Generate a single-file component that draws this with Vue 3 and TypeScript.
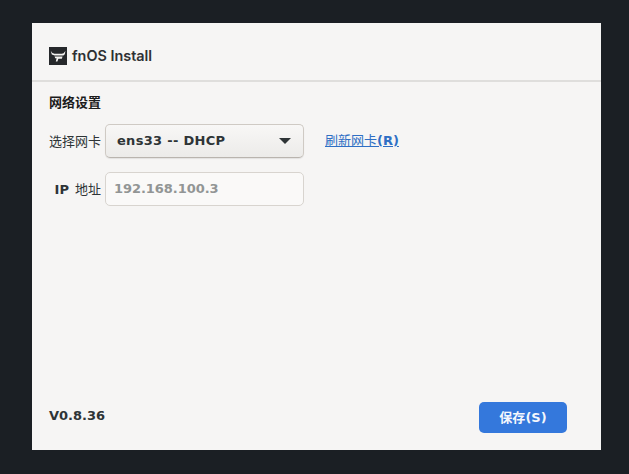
<template>
  <div class="screen">
    <div class="window">
      <header class="head">
        <svg class="logo" width="18" height="18" viewBox="0 0 18 18">
          <rect width="18" height="18" fill="#26282b" />
          <path d="M1.8 4 L2.8 7.4 L5.6 8.4 H14.4 L15.8 7.2 L16.4 4 L14.6 6.2 L12.8 6.8 H5.4 L3.4 6 Z" fill="#f5f4f2" />
          <path d="M5.6 9.6 H13.6 L12.8 11.8 H9.4 L8.4 14.6 H6.8 L7.6 11.2 H6.2 Z" fill="#f5f4f2" />
        </svg>
        <span class="brand">{{ brand }}</span>
      </header>

      <section class="body">
        <h2 class="section-title">网络设置</h2>
        <div class="row">
          <label class="label">选择网卡</label>
          <div class="select">
            <span>{{ nic }}</span>
            <i class="caret"></i>
          </div>
          <a class="refresh" href="#">刷新网卡<b>(R)</b></a>
        </div>
        <div class="row">
          <label class="label"><b>IP</b><span class="gap"></span>地址</label>
          <div class="input">{{ ip }}</div>
        </div>
      </section>

      <footer class="foot">
        <span class="version">{{ version }}</span>
        <button class="save">保存<b>(S)</b></button>
      </footer>
    </div>
  </div>
</template>

<script setup lang="ts">
import { ref } from 'vue'

const brand = ref('fnOS Install')
const nic = ref('ens33 -- DHCP')
const ip = ref('192.168.100.3')
const version = ref('V0.8.36')
</script>

<style>
html, body {
  margin: 0;
  background: #1b1f24;
}
</style>

<style scoped>
.screen {
  width: 629px;
  height: 474px;
  box-sizing: border-box;
  padding: 23px 28px 24px 32px;
  background: #1b1f24;
  font-family: "DejaVu Sans", "Noto Sans CJK SC", sans-serif;
}

.window {
  height: 427px;
  display: flex;
  flex-direction: column;
  background: #f6f5f4;
}

.head {
  height: 59px;
  box-sizing: border-box;
  padding: 24px 17px 0;
  display: flex;
  align-items: flex-start;
  gap: 5px;
  border-bottom: 2px solid #dfdedc;
  flex: none;
}

.logo {
  flex: none;
}

.brand {
  font-family: Inter, sans-serif;
  font-size: 14.4px;
  font-weight: 600;
  line-height: 18px;
  color: #2e3033;
}

.body {
  flex: 1;
  padding: 12px 17px 0;
}

.section-title {
  margin: 0 0 13px;
  font-size: 13px;
  line-height: 17px;
  font-weight: 700;
  color: #1c1c1c;
}

.row {
  display: flex;
  align-items: center;
  margin-bottom: 14px;
  height: 34px;
}

.label {
  width: 52px;
  flex: none;
  padding-bottom: 2px;
  text-align: right;
  font-size: 13px;
  color: #2e3436;
  white-space: nowrap;
}

.gap {
  display: inline-block;
  width: 6px;
}

.select,
.input {
  box-sizing: border-box;
  width: 199px;
  height: 34px;
  margin-left: 4px;
  border-radius: 5px;
  display: flex;
  align-items: center;
  font-size: 13px;
  font-weight: 700;
}

.select {
  justify-content: space-between;
  padding: 0 12px 2px 11px;
  border: 1px solid #cfcac4;
  border-bottom-color: #b9b4ae;
  background: linear-gradient(#f8f7f6, #ecebe9);
  box-shadow: 0 1px 1px rgba(0, 0, 0, 0.08);
  color: #2e3436;
  letter-spacing: 0.3px;
}

.caret {
  width: 0;
  height: 0;
  margin-top: 2px;
  border-left: 6px solid transparent;
  border-right: 6px solid transparent;
  border-top: 6px solid #2e3436;
}

.input {
  padding: 0 8px 2px;
  border: 1px solid #d8d4cf;
  background: #faf9f8;
  color: #929595;
  letter-spacing: -0.05px;
}

.refresh {
  margin-left: 21px;
  padding-bottom: 3px;
  font-size: 13px;
  color: #2f6fc4;
  text-decoration: underline;
}

.foot {
  flex: none;
  height: 48px;
  box-sizing: border-box;
  padding: 0 34px 0 17px;
  display: flex;
  justify-content: space-between;
  align-items: flex-start;
}

.version {
  font-size: 13px;
  font-weight: 700;
  line-height: 27px;
  color: #2e3436;
}

.save {
  width: 88px;
  height: 31px;
  padding: 0 0 3px;
  border: none;
  border-radius: 5px;
  background: #3478dc;
  color: #f4f7fc;
  font-family: inherit;
  font-size: 13px;
  font-weight: 700;
}
</style>
